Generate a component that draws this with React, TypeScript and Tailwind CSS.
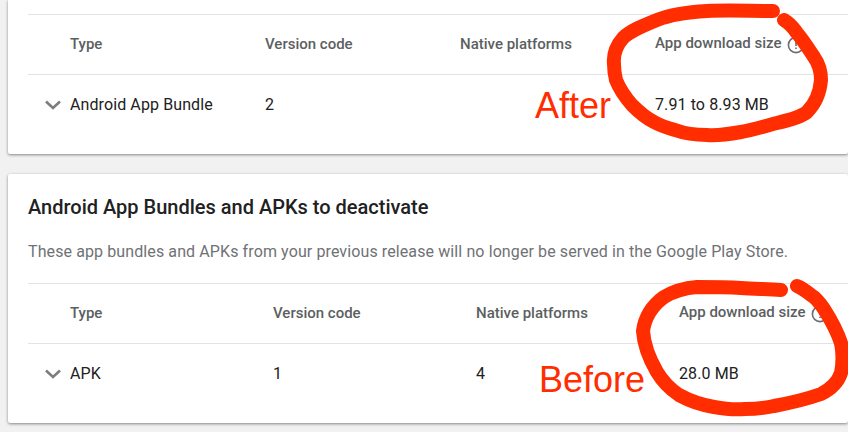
import React from 'react';

const font = "font-['Roboto',sans-serif]";

interface Row {
    type: string;
    version: string;
    platforms: string;
    size: string;
}

const ReleaseTable: React.FC<{ columns: string; row: Row }> = ({ columns, row }) => (
    <div>
        {/* Header */}
        <div className={`grid ${columns} h-[61px] items-center border-y border-[#e3e3e3] text-[15px] font-medium text-[#5c5f62]`}>
            <span />
            <span>Type</span>
            <span>Version code</span>
            <span>Native platforms</span>
            <span className="flex items-center gap-[6px] -translate-y-px">
                App download size
                <svg width="18" height="18" viewBox="0 0 18 18" fill="none" className="translate-y-px">
                    <circle cx="9" cy="9" r="7.6" stroke="#6b6e71" strokeWidth="1.6" />
                    <path d="M9 5v5M9 11.5v1.6" stroke="#6b6e71" strokeWidth="1.6" />
                </svg>
            </span>
        </div>
        {/* Row */}
        <div className={`grid ${columns} h-[60px] items-center text-base tracking-[0.1px] text-[#212121]`}>
            <svg width="20" height="12" viewBox="0 0 20 12" fill="none" className="ml-[15px]">
                <path d="M3 2.5L10 9L17 2.5" stroke="#7d7d7d" strokeWidth="2.6" />
            </svg>
            <span>{row.type}</span>
            <span>{row.version}</span>
            <span>{row.platforms}</span>
            <span>{row.size}</span>
        </div>
    </div>
);

export default function App() {
    return (
        <div className={`relative h-[432px] w-[848px] overflow-hidden bg-[#f1f1f1] ${font}`}>
            {/* After card */}
            <div className="ml-2 h-[154px] bg-white pl-5 pt-[14px] shadow-[0_1px_3px_rgba(0,0,0,0.45)] rounded-b-[2px]">
                <ReleaseTable
                    columns="grid-cols-[42px_195px_195px_195px_1fr]"
                    row={{ type: 'Android App Bundle', version: '2', platforms: '', size: '7.91 to 8.93 MB' }}
                />
            </div>

            {/* Before card */}
            <div className="ml-2 mt-5 h-[249px] bg-white pl-5 shadow-[0_1px_3px_rgba(0,0,0,0.45)] rounded-[2px]">
                <h2 className="pt-[20px] text-xl leading-[26px] font-medium text-[#212121]">
                    Android App Bundles and APKs to deactivate
                </h2>
                <p className="mt-5 h-[43px] text-base leading-6 tracking-[0.105px] text-[#6f7275]">
                    These app bundles and APKs from your previous release will no longer be served in the Google Play Store.
                </p>
                <ReleaseTable
                    columns="grid-cols-[42px_203px_203px_203px_1fr]"
                    row={{ type: 'APK', version: '1', platforms: '4', size: '28.0 MB' }}
                />
            </div>

            {/* Hand-drawn annotations on top of the screenshot */}
            <svg className="absolute inset-0" width="848" height="432" fill="none" stroke="#ff2d00" strokeWidth="14" strokeLinecap="round" strokeLinejoin="round">
                <path d="M773 11C750 11 728 10 707 11C688 12 672 14 657 20C642 26 630 31 623 38C616 46 613 54 614 64C614 71 615 76 616 80C620 90 625 97 632 105C639 112 646 118 654 122C661 126 668 128 675 130C686 134 697 135 707 135C719 136 730 134 741 132C753 130 765 126 777 123C790 120 801 117 807 112C815 104 820 92 821 80C821 71 819 64 814 57C808 48 803 40 797 33C793 27 789 23 784 20" />
                <path d="M781 290C768 289 755 289 741 288C726 287 710 287 697 287C685 288 674 291 664 297C653 305 645 316 643 331C644 346 650 360 657 372C663 382 670 389 679 395C690 401 702 405 714 407C725 409 735 410 745 409C755 409 765 408 774 406C790 403 807 399 821 394C831 389 838 382 841 373C843 363 843 353 841 343C837 331 831 320 824 309C820 303 816 298 811 295C806 291 802 288 797 286" />
            </svg>
            <span className="absolute left-[535px] top-[84px] font-['Liberation_Sans',sans-serif] text-[36px] leading-[44px] text-[#ff2d00]">After</span>
            <span className="absolute left-[539px] top-[358px] font-['Liberation_Sans',sans-serif] text-[36px] leading-[44px] text-[#ff2d00]">Before</span>
        </div>
    );
}
